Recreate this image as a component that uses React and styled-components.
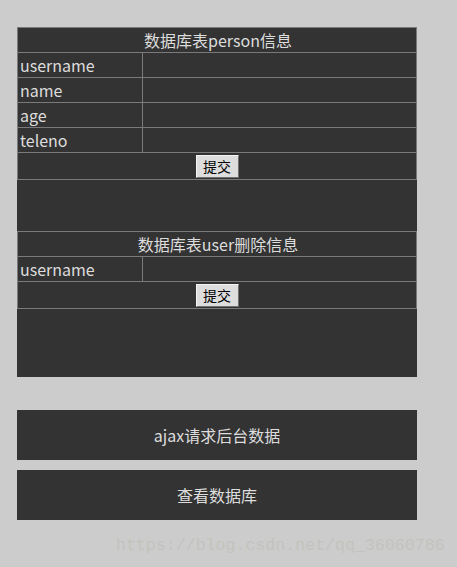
import styled, { createGlobalStyle } from "styled-components";

const GlobalStyle = createGlobalStyle`
  html, body {
    margin: 0;
    padding: 0;
    background: #cccccc;
  }
  body {
    font-family: "Noto Sans CJK SC", "Noto Sans", sans-serif;
  }
`;

const Page = styled.div`
  position: relative;
  width: 457px;
  height: 567px;
  padding: 27px 0 0 17px;
  box-sizing: border-box;
`;

const Panel = styled.div`
  width: 400px;
  height: 350px;
  background: #333333;
`;

const FormTable = styled.table`
  width: 400px;
  border-collapse: collapse;
  color: #dddddd;
  font-size: 16px;
  margin-bottom: ${({ $gap }) => $gap || 0}px;
  table-layout: fixed;
`;

const LabelCol = styled.col`
  width: 125px;
`;

const Cell = styled.td`
  border: 1px solid #7a7a7a;
  height: 25px;
  padding: 0 0 0 2px;
  line-height: 22px;
  text-align: ${({ $center }) => ($center ? "center" : "left")};
  box-sizing: border-box;
  vertical-align: middle;
`;

const SubmitCell = styled(Cell)`
  height: 27px;
  text-align: center;
  padding: 0;
`;

const SubmitButton = styled.button`
  width: 43px;
  height: 23px;
  padding: 0;
  margin: 1px 0 0;
  font-family: "Noto Sans CJK SC", sans-serif;
  font-size: 14px;
  line-height: 19px;
  color: #000;
  background: #dddddd;
  border: 1px solid #f4f4f4;
  border-right-color: #707070;
  border-bottom-color: #707070;
  vertical-align: top;
`;

const ActionButton = styled.div`
  width: 400px;
  height: 50px;
  margin-top: ${({ $top }) => $top}px;
  background: #333333;
  color: #dddddd;
  font-size: 16px;
  display: flex;
  align-items: center;
  justify-content: center;
`;

const Watermark = styled.div`
  position: absolute;
  left: 116px;
  top: 536px;
  font-family: "Liberation Mono", "DejaVu Sans Mono", monospace;
  font-size: 16.6px;
  color: #c3c3be;
`;

const personFields = ["username", "name", "age", "teleno"];

function FieldRow({ label }) {
  return (
    <tr>
      <Cell>{label}</Cell>
      <Cell />
    </tr>
  );
}

function Columns() {
  return (
    <colgroup>
      <LabelCol />
      <col />
    </colgroup>
  );
}

export default function App() {
  return (
    <>
      <GlobalStyle />
      <Page>
        <Panel>
          <FormTable $gap={51}>
            <Columns />
            <tbody>
              <tr>
                <Cell colSpan={2} $center>数据库表person信息</Cell>
              </tr>
              {personFields.map((f) => (
                <FieldRow key={f} label={f} />
              ))}
              <tr>
                <SubmitCell colSpan={2}>
                  <SubmitButton>提交</SubmitButton>
                </SubmitCell>
              </tr>
            </tbody>
          </FormTable>
          <FormTable>
            <Columns />
            <tbody>
              <tr>
                <Cell colSpan={2} $center>数据库表user删除信息</Cell>
              </tr>
              <FieldRow label="username" />
              <tr>
                <SubmitCell colSpan={2}>
                  <SubmitButton>提交</SubmitButton>
                </SubmitCell>
              </tr>
            </tbody>
          </FormTable>
        </Panel>
        <ActionButton $top={33}>ajax请求后台数据</ActionButton>
        <ActionButton $top={10}>查看数据库</ActionButton>
        <Watermark>https://blog.csdn.net/qq_36060786</Watermark>
      </Page>
    </>
  );
}
